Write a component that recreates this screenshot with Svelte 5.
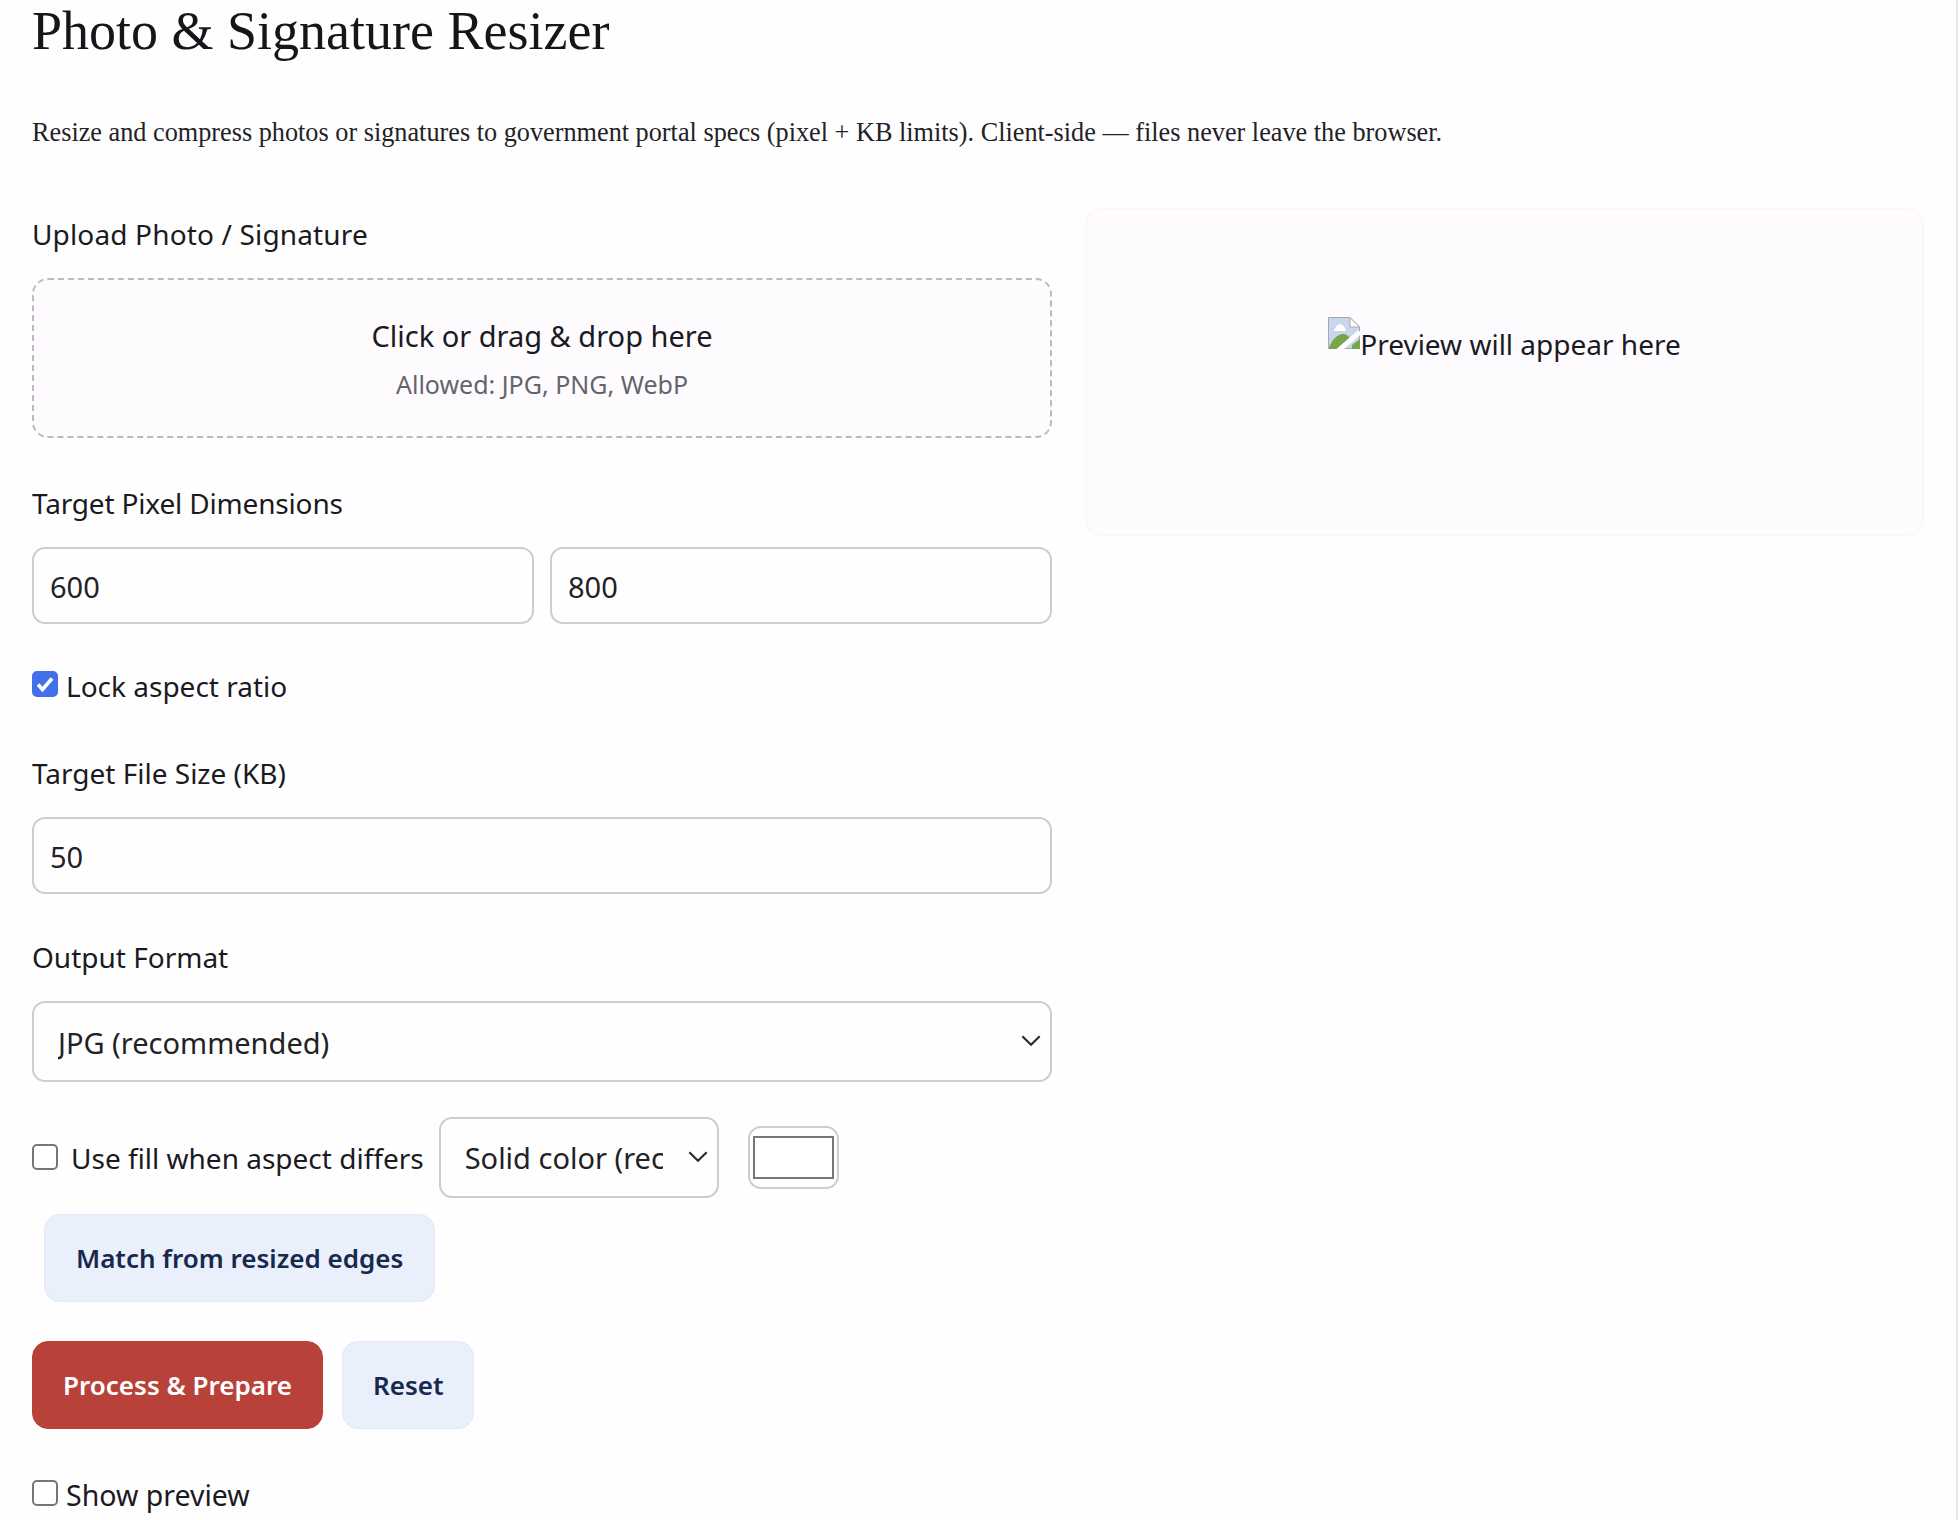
<script>
	let width = $state(600);
	let height = $state(800);
	let kb = $state(50);
	let lockAspect = $state(true);
	let useFill = $state(false);
	let showPreview = $state(false);
	let format = $state('jpg');
	let fillMode = $state('solid');
</script>

<main class="page">
	<h1>Photo &amp; Signature Resizer</h1>
	<p class="intro">Resize and compress photos or signatures to government portal specs (pixel + KB limits). Client-side — files never leave the browser.</p>

	<div class="columns">
		<section class="form">
			<div class="field-label first">Upload Photo / Signature</div>
			<div class="dropzone">
				<div class="drop-title">Click or drag &amp; drop here</div>
				<div class="drop-hint">Allowed: JPG, PNG, WebP</div>
			</div>

			<div class="field-label dims">Target Pixel Dimensions</div>
			<div class="pair">
				<input type="number" bind:value={width} />
				<input type="number" bind:value={height} />
			</div>

			<label class="check lock">
				<input type="checkbox" bind:checked={lockAspect} />
				<span>Lock aspect ratio</span>
			</label>

			<div class="field-label size">Target File Size (KB)</div>
			<input class="wide" type="number" bind:value={kb} />

			<div class="field-label format">Output Format</div>
			<div class="select-wrap">
				<select bind:value={format}>
					<option value="jpg">JPG (recommended)</option>
					<option value="png">PNG</option>
					<option value="webp">WebP</option>
				</select>
				<svg class="chev" viewBox="0 0 20 12" aria-hidden="true"><path d="M2 2l8 8 8-8" /></svg>
			</div>

			<div class="fill-row">
				<label class="check fill">
					<input type="checkbox" bind:checked={useFill} />
					<span>Use fill when aspect differs</span>
				</label>
				<div class="select-wrap small">
					<select bind:value={fillMode}>
						<option value="solid">Solid color (recommended)</option>
						<option value="blur">Blurred edges</option>
					</select>
					<svg class="chev" viewBox="0 0 20 12" aria-hidden="true"><path d="M2 2l8 8 8-8" /></svg>
				</div>
				<span class="swatch"><span class="swatch-inner"></span></span>
			</div>

			<button class="soft match">Match from resized edges</button>

			<div class="actions">
				<button class="primary">Process &amp; Prepare</button>
				<button class="soft">Reset</button>
			</div>

			<label class="check preview-toggle">
				<input type="checkbox" bind:checked={showPreview} />
				<span>Show preview</span>
			</label>
		</section>

		<aside class="preview">
			<div class="preview-msg">
				<svg class="broken" viewBox="0 0 32 32" aria-hidden="true">
					<path d="M.5.5H22L31.5 10V31.5H.5z" fill="#c9d7ee" stroke="#a4a9b0" />
					<path d="M22 .5V10h9.5z" fill="#fff" stroke="#a4a9b0" />
					<path d="M6 14c1-4 4-7 6-7s5 3 6 7z" fill="#fff" />
					<path d="M1 31c3-9 9-14 14-14 3 0 6 2 8 5L12 32H1zM24 28l8-6v10h-8z" fill="#76a648" />
					<path d="M10 34L32 15" stroke="#fffdff" stroke-width="5" />
				</svg><span>Preview will appear here</span>
			</div>
		</aside>
	</div>
	<div class="scroll-edge"></div>
</main>

<style>
	:global(body) {
		margin: 0;
		background: #fffeff;
		color: #1a1a1f;
		font-family: "Noto Sans", "Open Sans", sans-serif;
	}
	.page {
		position: relative;
		padding: 0 36px 0 32px;
		height: 1520px;
		box-sizing: border-box;
		overflow: hidden;
	}
	.scroll-edge {
		position: absolute;
		top: 0;
		bottom: 0;
		right: 2px;
		width: 2px;
		background: #e8e8ea;
	}
	h1 {
		margin: 0;
		padding-top: 1px;
		font-family: "Liberation Serif", serif;
		font-weight: 400;
		font-size: 54px;
		line-height: 60px;
		color: #15151a;
	}
	.intro {
		margin: 57px 0 0;
		font-family: "Liberation Serif", serif;
		font-size: 26.25px;
		line-height: 30px;
		color: #222226;
	}
	.columns {
		display: grid;
		grid-template-columns: 1020px 839px;
		gap: 33px;
		margin-top: 60px;
		align-items: start;
	}
	.form {
		display: flex;
		flex-direction: column;
		align-items: stretch;
	}
	.field-label {
		font-size: 28px;
		line-height: 38px;
	}
	.field-label.first { margin-top: 7px; letter-spacing: 0.15px; }
	.field-label.dims { margin-top: 46px; letter-spacing: -0.17px; }
	.field-label.size { margin-top: 49px; }
	.field-label.format { margin-top: 44px; }
	.dropzone {
		margin-top: 25px;
		height: 160px;
		box-sizing: border-box;
		border: 2px dashed #bdb9bf;
		border-radius: 16px;
		background: #fefbfe;
		text-align: center;
		padding-top: 34px;
	}
	.drop-title {
		font-size: 29px;
		line-height: 44px;
	}
	.drop-hint {
		font-size: 25px;
		line-height: 40px;
		color: #64646c;
		margin-top: 6px;
	}
	.pair {
		display: grid;
		grid-template-columns: 1fr 1fr;
		gap: 16px;
		margin-top: 25px;
	}
	input[type='number'] {
		box-sizing: border-box;
		width: 100%;
		height: 77px;
		padding: 2px 16px 0;
		border: 2px solid #cfcbd0;
		border-radius: 13px;
		background: #fffeff;
		color: #222226;
		font: inherit;
		font-size: 29px;
		appearance: textfield;
		outline: none;
	}
	input.wide {
		margin-top: 25px;
	}
	.check {
		display: flex;
		align-items: center;
		font-size: 28px;
		line-height: 38px;
	}
	.check input {
		appearance: none;
		box-sizing: border-box;
		margin: 0;
		width: 26px;
		height: 26px;
		border: 2px solid #77757a;
		border-radius: 5px;
		background: #fff;
		flex: none;
	}
	.check input:checked {
		border-color: #4170e8;
		background: #4170e8 url("data:image/svg+xml,%3Csvg xmlns='http://www.w3.org/2000/svg' viewBox='0 0 22 22'%3E%3Cpath d='M4 11.5l4.5 5 9.5-11' fill='none' stroke='%23fff' stroke-width='3.6'/%3E%3C/svg%3E") center / 100% no-repeat;
	}
	.lock { margin-top: 43px; gap: 8px; }
	.lock input, .preview-toggle input { margin-top: -4px; }
	.fill { gap: 13px; }
	.fill input { margin-top: -2px; }
	.preview-toggle { margin-top: 47px; gap: 8px; font-size: 28.5px; }
	.select-wrap {
		position: relative;
		margin-top: 25px;
	}
	select {
		display: block;
		box-sizing: border-box;
		width: 100%;
		height: 81px;
		padding: 2px 54px 0 24px;
		border: 2px solid #cfcbd0;
		border-radius: 13px;
		background: #fffeff;
		color: #222226;
		font: inherit;
		font-size: 29px;
		appearance: none;
		outline: none;
	}
	.select-wrap.small select {
		padding-top: 0;
	}
	.chev {
		position: absolute;
		right: 10px;
		top: 33px;
		width: 22px;
		height: 13px;
		pointer-events: none;
	}
	.chev path {
		fill: none;
		stroke: #2b2b30;
		stroke-width: 2;
	}
	.fill-row {
		display: flex;
		align-items: center;
		margin-top: 35px;
		gap: 15px;
	}
	.select-wrap.small {
		margin: 0;
		width: 280px;
		flex: none;
	}
	.swatch {
		box-sizing: border-box;
		display: block;
		flex: none;
		width: 91px;
		height: 63px;
		margin-left: 14px;
		padding: 8px 3px;
		border: 2px solid #cfcbd0;
		border-radius: 13px;
		background: #fffeff;
	}
	.swatch-inner {
		display: block;
		box-sizing: border-box;
		height: 100%;
		border: 2px solid #77757a;
		background: #fff;
	}
	button {
		box-sizing: border-box;
		font: inherit;
		font-size: 26px;
		font-weight: 600;
		border-radius: 16px;
		height: 88px;
		padding: 0 31px;
	}
	.soft {
		background: #e9effb;
		border: 1px solid #e4e8f2;
		color: #17294d;
	}
	.match {
		align-self: flex-start;
		margin: 16px 0 0 12px;
	}
	.actions {
		display: flex;
		gap: 19px;
		margin-top: 39px;
	}
	.actions button {
		padding: 0 30px;
	}
	.primary {
		background: #b8423a;
		border: 1px solid #b8423a;
		color: #fff;
	}
	.preview {
		box-sizing: border-box;
		height: 328px;
		border: 2px solid #fbf6fa;
		border-radius: 16px;
		background: #fefbff;
		padding-top: 107px;
		text-align: center;
	}
	.preview-msg {
		display: inline-flex;
		align-items: flex-start;
		font-size: 28px;
		line-height: 40px;
	}
	.preview-msg span {
		margin-top: 7px;
	}
	.broken {
		width: 32px;
		height: 32px;
		flex: none;
	}
</style>
